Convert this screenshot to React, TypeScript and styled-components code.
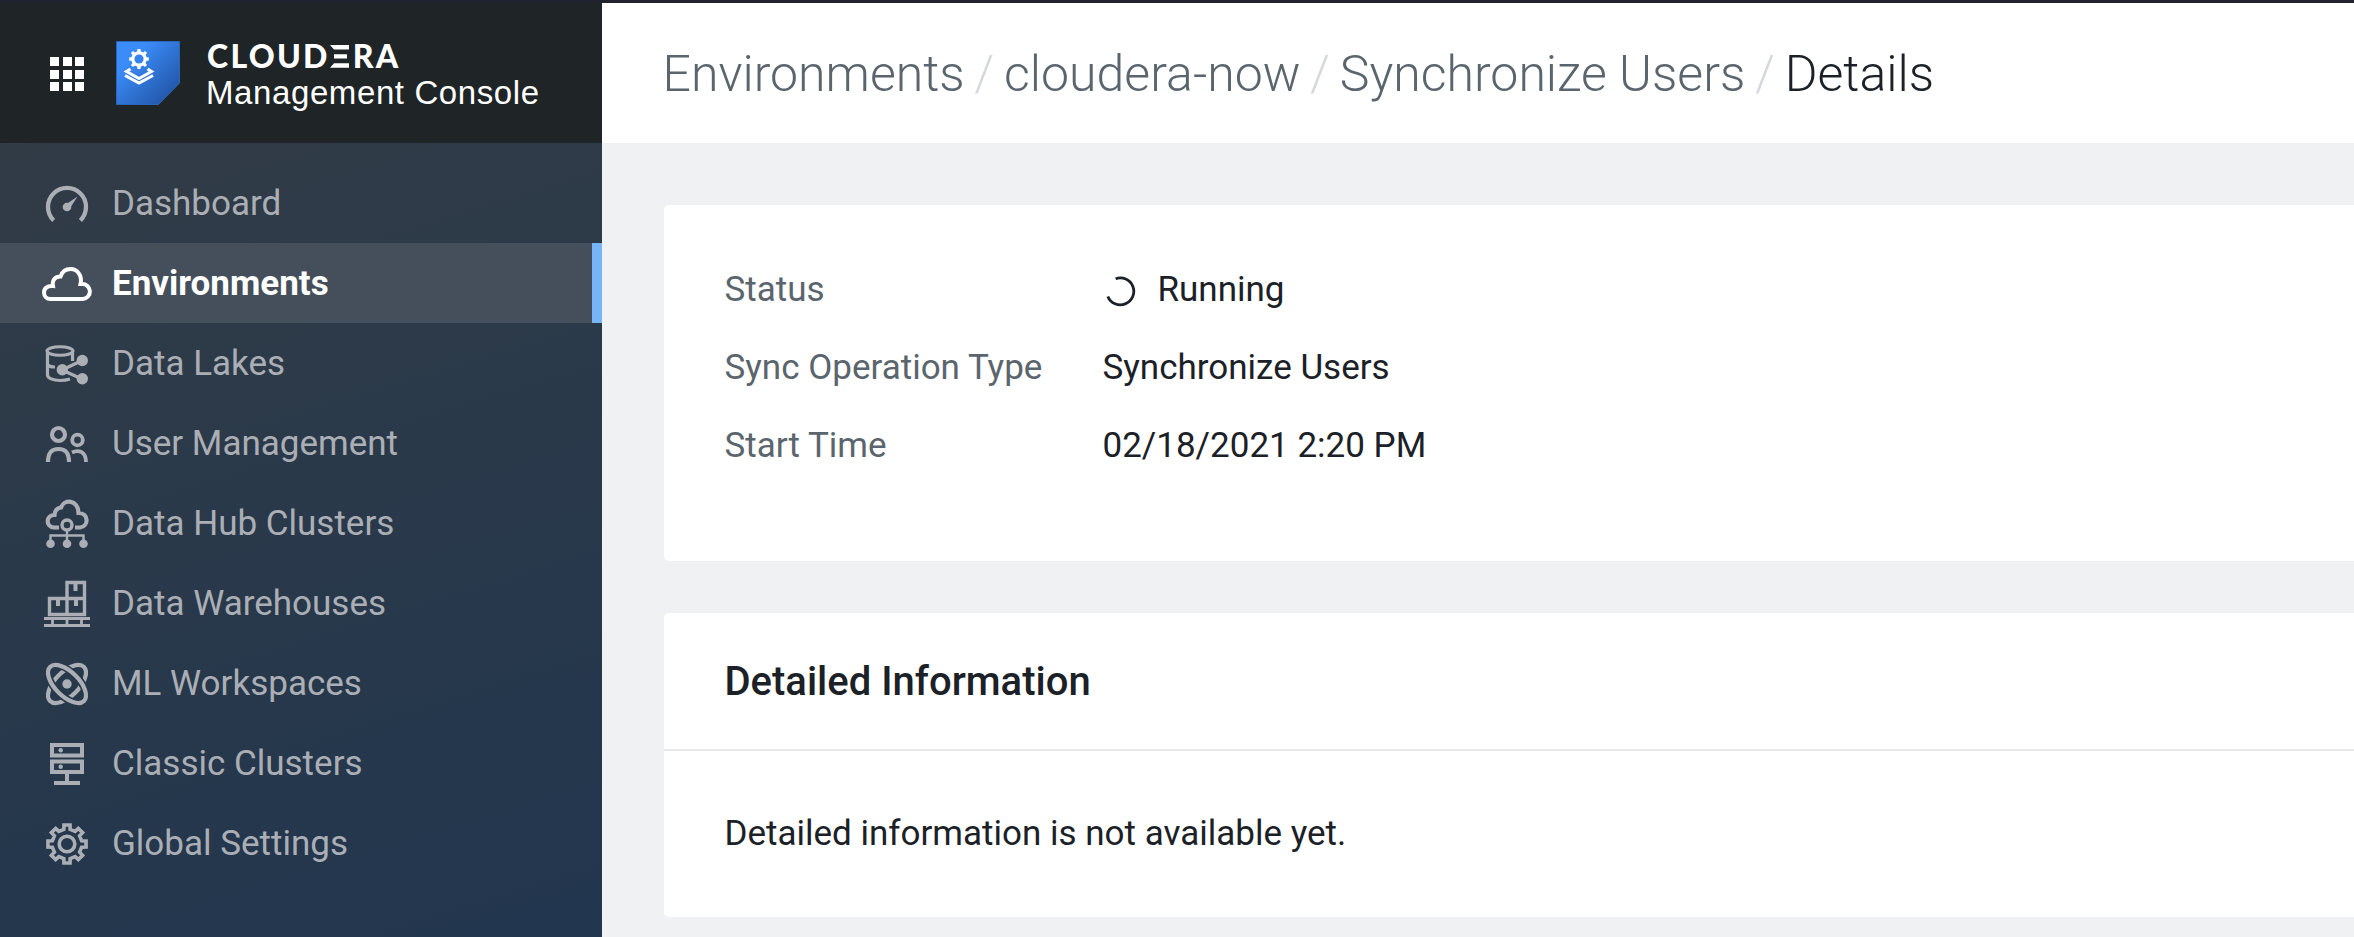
import React from "react";
import styled, { createGlobalStyle, css } from "styled-components";

const Global = createGlobalStyle`
  *, *::before, *::after { box-sizing: border-box; }
  body { margin: 0; background: #f0f1f3; font-family: Roboto, sans-serif; color: #1b2127; overflow: hidden; }
  h1, h2, p, ul, ol, dl, dd { margin: 0; padding: 0; font-weight: inherit; }
`;

const Page = styled.div`
  height: 937px;
  display: flex;
  border-top: 3px solid #20222e;
`;

const Sidebar = styled.aside`
  width: 602px;
  flex: none;
  display: flex;
  flex-direction: column;
  background: linear-gradient(163deg, #343c45 0%, #2c3a49 40%, #22364f 100%);
`;

const Brand = styled.header`
  height: 140px;
  flex: none;
  display: flex;
  align-items: center;
  background: #1f2427;
  padding-left: 50px;
`;

const Launcher = styled.div`
  display: grid;
  grid-template-columns: repeat(3, 9px);
  grid-auto-rows: 9px;
  gap: 3.5px;
  margin: 2px 32px 0 0;
`;

const LauncherDot = styled.span`
  background: #fff;
`;

const BrandText = styled.div`
  margin-left: 26px;
  padding-top: 5px;
  color: #fff;
`;

const Wordmark = styled.div`
  display: flex;
  padding-left: 1px;
  font: 900 32px/32px Lato, sans-serif;
  letter-spacing: 2.3px;
`;

const BarredE = styled.span`
  position: relative;
  width: 23px;
  color: transparent;
`;

const BarredEDrawing = styled.svg`
  position: absolute;
  left: 0;
  top: 5.500px;
`;

const Product = styled.div`
  margin-top: 2px;
  font: 400 33px/38px "Liberation Sans", sans-serif;
  letter-spacing: 0.6px;
`;

const Menu = styled.ul`
  list-style: none;
  padding-top: 20px;
`;

const MenuItem = styled.li<{ $active?: boolean }>`
  height: 80px;
  display: flex;
  align-items: center;
  padding-left: 36px;
  gap: 14px;
  font-size: 35px;
  color: #abafb5;
  svg { flex: none; }
  ${(p) =>
    p.$active &&
    css`
      background: #444f5b;
      border-right: 10px solid #76b6f8;
      color: #fff;
      font-weight: 700;
    `}
`;

const Main = styled.main`
  flex: 1;
  min-width: 0;
  display: flex;
  flex-direction: column;
`;

const TopBar = styled.header`
  height: 140px;
  flex: none;
  background: #fff;
  padding: 2px 0 0 60.500px;
  display: flex;
  align-items: center;
`;

const Crumbs = styled.ol`
  display: flex;
  list-style: none;
  font-size: 50px;
  font-weight: 300;
  line-height: 60px;
  color: #5a656d;
`;

const Crumb = styled.li<{ $current?: boolean }>`
  color: ${(p) => (p.$current ? "#1b2127" : "inherit")};
  &:not(:first-child)::before {
    content: "/";
    color: #d6d8dd;
    padding: 0 10px 0 9.500px;
  }
`;

const Content = styled.div`
  padding: 62px 0 0 62px;
  display: flex;
  flex-direction: column;
  gap: 52px;
`;

const Card = styled.section`
  background: #fff;
  border-radius: 5px 0 0 5px;
`;

const Summary = styled(Card)`
  height: 356px;
  padding: 45px 60.500px;
`;

const Fields = styled.dl`
  display: grid;
  grid-template-columns: 378px 1fr;
  grid-auto-rows: 78px;
  align-items: center;
  font-size: 35px;
`;

const FieldName = styled.dt`
  color: #5a656d;
`;

const FieldValue = styled.dd`
  display: flex;
  align-items: center;
  gap: 20px;
`;

const CardTitle = styled.h2`
  height: 138px;
  padding-left: 60.500px;
  display: flex;
  align-items: center;
  font-size: 40px;
  font-weight: 500;
  border-bottom: 2px solid #e8e9eb;
`;

const CardBody = styled.p`
  height: 166px;
  padding: 0 0 2px 60.500px;
  display: flex;
  align-items: center;
  font-size: 35px;
`;

const gearPath = (cx: number, cy: number, teeth: number, outer: number, inner: number) => {
  const pts: string[] = [];
  const step = (Math.PI * 2) / teeth;
  for (let i = 0; i < teeth; i++) {
    const a = i * step - Math.PI / 2;
    const add = (r: number, t: number) =>
      pts.push(`${(cx + r * Math.cos(a + t)).toFixed(2)} ${(cy + r * Math.sin(a + t)).toFixed(2)}`);
    add(inner, -step * 0.27);
    add(outer, -step * 0.2);
    add(outer, step * 0.2);
    add(inner, step * 0.27);
  }
  return `M${pts.join("L")}Z`;
};

const Icon = ({ children }: { children: React.ReactNode }) => (
  <svg width="62" height="60" viewBox="0 0 62 60" fill="none" stroke="currentColor" strokeWidth="4">
    {children}
  </svg>
);

const ProductLogo = () => (
  <svg width="64" height="64" viewBox="0 0 64 64">
    <defs>
      <linearGradient id="tile" x1="0" y1="0" x2="1" y2="1">
        <stop offset="0.25" stopColor="#3b8cf8" />
        <stop offset="0.95" stopColor="#1f4f9f" />
      </linearGradient>
    </defs>
    <path d="M.5 .5H63.500V42L42.500 63.500H.5Z" fill="url(#tile)" stroke="#2a67b8" />
    <path d={gearPath(23, 18, 8, 10, 7.800)} fill="#fff" />
    <circle cx="23" cy="18" r="4.600" fill="#3583ee" />
    <g fill="none" stroke="#fff" strokeWidth="3">
      <path d="M14.500 28L10.500 30.500L23 37.500L35.500 30.500L31.500 28" />
      <path d="M9 34.500L23 42L37 34.500" />
    </g>
  </svg>
);

const items: { label: string; active?: boolean; icon: React.ReactNode }[] = [
  {
    label: "Dashboard",
    icon: (
      <>
        <path d="M17.600 47.400A19 19 0 1 1 44.400 47.400" strokeWidth="4.300" />
        <circle cx="31" cy="34" r="4.300" fill="currentColor" stroke="none" />
        <path d="M29 32L41.500 23.500L33.500 36Z" fill="currentColor" stroke="none" />
      </>
    ),
  },
  {
    label: "Environments",
    active: true,
    icon: (
      <path d="M14.500 46H46.800A7.500 7.500 0 0 0 46 31H44.500C46.500 22 41 16 34.500 16C29.500 16 26 19 24.500 23.500C19 23.500 16 27 17 33C11 32.500 8 35.500 8 39.500C8 43.500 11 46 14.500 46Z" />
    ),
  },
  {
    label: "Data Lakes",
    icon: (
      <>
        <ellipse cx="24" cy="18" rx="13" ry="4.300" strokeWidth="3" />
        <path d="M11.500 18V42C11.500 45 17 47.500 24 47.500C28 47.500 31 47 34 46M36.500 18V28M11.500 31C12 33 15 34 19 34" strokeWidth="3.200" />
        <path d="M46 27.500L26 37L46 46" strokeWidth="3.200" />
        <g fill="currentColor" stroke="none">
          <circle cx="46.300" cy="27.500" r="5.700" />
          <circle cx="26.300" cy="36.800" r="5.700" />
          <circle cx="46.300" cy="45.800" r="5.700" />
        </g>
      </>
    ),
  },
  {
    label: "User Management",
    icon: (
      <>
        <circle cx="22.500" cy="21.500" r="6.500" strokeWidth="4.200" />
        <circle cx="41.500" cy="27" r="5.300" strokeWidth="3.800" />
        <path d="M12 49C12 39 16 36 22.500 36S33 39 33 49" strokeWidth="4.200" />
        <path d="M36 39.500C43 36 50 39 50 49" strokeWidth="3.800" />
      </>
    ),
  },
  {
    label: "Data Hub Clusters",
    icon: (
      <>
        <path d="M23 34.500H18C9 33.500 10 22 18.500 22C19 17 21 15 25 14.500C28 6 42 6 42.500 20C53 20 53 33.500 44 34.500H39" strokeWidth="4.200" />
        <circle cx="31" cy="32" r="5" strokeWidth="3.400" />
        <path d="M31 37V50M14.500 50V42.500H47.500V50" strokeWidth="2.400" />
        <g fill="currentColor" stroke="none">
          <circle cx="14.500" cy="50.800" r="4.300" />
          <circle cx="31" cy="50.800" r="4.300" />
          <circle cx="47.500" cy="50.800" r="4.300" />
        </g>
      </>
    ),
  },
  {
    label: "Data Warehouses",
    icon: (
      <>
        <path d="M13.500 25.500H48.500V41.500H13.500ZM31 41.500V9.500H48.500V26" strokeWidth="3.400" />
        <path d="M22 25V33M40 25V33M39.500 9V18" strokeWidth="4" />
        <path d="M8 45.500H54M8 52.500H54" strokeWidth="3" />
        <path d="M16.500 45V53M31 45V53M45.500 45V53" strokeWidth="2.800" />
      </>
    ),
  },
  {
    label: "ML Workspaces",
    icon: (
      <>
        <mask id="orbit" maskUnits="userSpaceOnUse" x="0" y="0" width="62" height="62">
          <path d="M0 0H62V62H0Z" fill="#fff" stroke="none" />
          <ellipse cx="31" cy="31" rx="24" ry="12" transform="rotate(45 31 31)" stroke="#000" strokeWidth="7.500" />
        </mask>
        <ellipse cx="31" cy="31" rx="24" ry="12" transform="rotate(45 31 31)" strokeWidth="4.200" />
        <g mask="url(#orbit)">
          <ellipse cx="31" cy="31" rx="24" ry="12" transform="rotate(-45 31 31)" strokeWidth="4.200" />
        </g>
        <circle cx="31" cy="31" r="4.700" fill="currentColor" stroke="none" />
      </>
    ),
  },
  {
    label: "Classic Clusters",
    icon: (
      <>
        <path d="M16 12H46V22.500H16ZM16 28.500H46V39H16Z" />
        <path d="M31 40V50" />
        <path d="M18 50H44" />
        <g fill="currentColor" stroke="none">
          <circle cx="24.700" cy="17.300" r="2.200" />
          <circle cx="24.700" cy="33.800" r="2.200" />
        </g>
      </>
    ),
  },
  {
    label: "Global Settings",
    icon: (
      <>
        <path d={gearPath(31, 31, 8, 19.300, 15)} strokeWidth="3.600" />
        <circle cx="31" cy="31" r="7.800" strokeWidth="3.600" />
      </>
    ),
  },
];

const Spinner = () => (
  <svg width="35" height="35" viewBox="0 0 35 35" fill="none" stroke="#1b2127" strokeWidth="2.800">
    <path d="M12.600 6.700A13.500 13.500 0 1 1 4.800 24.500" />
  </svg>
);

export default function App() {
  return (
    <Page>
      <Global />
      <Sidebar>
        <Brand>
          <Launcher>
            {Array.from({ length: 9 }, (_, i) => (
              <LauncherDot key={i} />
            ))}
          </Launcher>
          <ProductLogo />
          <BrandText>
            <Wordmark>
              CLOUD
              <BarredE>
                E
                <BarredEDrawing width="20" height="24" viewBox="0 0 20 24" fill="#fff">
                  <path d="M0 0H19V4.500H4ZM4 9.200H17V13.500H4ZM4 18.300H19V22.800H0Z" />
                </BarredEDrawing>
              </BarredE>
              RA
            </Wordmark>
            <Product>Management Console</Product>
          </BrandText>
        </Brand>
        <Menu>
          {items.map((item) => (
            <MenuItem key={item.label} $active={item.active}>
              <Icon>{item.icon}</Icon>
              {item.label}
            </MenuItem>
          ))}
        </Menu>
      </Sidebar>
      <Main>
        <TopBar>
          <Crumbs>
            <Crumb>Environments</Crumb>
            <Crumb>cloudera-now</Crumb>
            <Crumb>Synchronize Users</Crumb>
            <Crumb $current>Details</Crumb>
          </Crumbs>
        </TopBar>
        <Content>
          <Summary>
            <Fields>
              <FieldName>Status</FieldName>
              <FieldValue>
                <Spinner />
                Running
              </FieldValue>
              <FieldName>Sync Operation Type</FieldName>
              <FieldValue>Synchronize Users</FieldValue>
              <FieldName>Start Time</FieldName>
              <FieldValue>02/18/2021 2:20 PM</FieldValue>
            </Fields>
          </Summary>
          <Card>
            <CardTitle>Detailed Information</CardTitle>
            <CardBody>Detailed information is not available yet.</CardBody>
          </Card>
        </Content>
      </Main>
    </Page>
  );
}
